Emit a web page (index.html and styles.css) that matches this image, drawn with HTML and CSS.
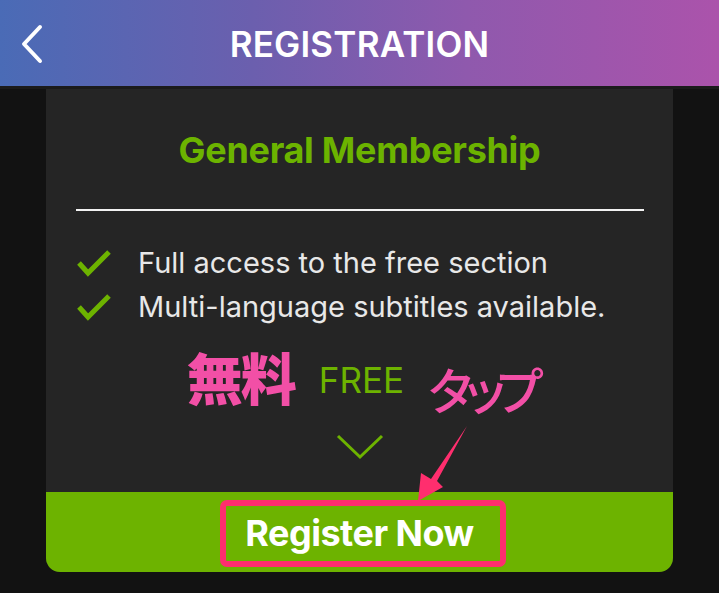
FILE: index.html
```html
<!DOCTYPE html>
<html lang="en">
<head>
    <meta charset="UTF-8">
    <meta name="viewport" content="width=device-width, initial-scale=1.0">
    <title>Registration</title>
    <link rel="stylesheet" href="styles.css">
</head>
<body>
    <header class="topbar">
        <button class="back" aria-label="Back">
            <svg width="24" height="40" viewBox="0 0 24 40">
                <path d="M20 3 L4 20 L20 37" fill="none" stroke="#fff" stroke-width="4" stroke-linecap="round" stroke-linejoin="round"/>
            </svg>
        </button>
        <h1 class="topbar-title">REGISTRATION</h1>
        <span></span>
    </header>
    <div class="topbar-edge"></div>

    <div class="card">
        <h2 class="plan-title">General Membership</h2>
        <hr class="divider">

        <ul class="features">
            <li>
                <svg class="check" width="36" height="28" viewBox="0 0 36 28">
                    <path d="M3 14 L12 24 L33 3" fill="none" stroke="#6db300" stroke-width="5"/>
                </svg>
                Full access to the free section
            </li>
            <li>
                <svg class="check" width="36" height="28" viewBox="0 0 36 28">
                    <path d="M3 14 L12 24 L33 3" fill="none" stroke="#6db300" stroke-width="5"/>
                </svg>
                Multi-language subtitles available.
            </li>
        </ul>

        <div class="price-row">
            <span class="note-free">無料</span>
            <span class="price">FREE</span>
            <span class="note-tap">タップ</span>
        </div>

        <svg class="chevron" width="48" height="26" viewBox="0 0 48 26">
            <path d="M2 2 L24 23 L46 2" fill="none" stroke="#6db300" stroke-width="3"/>
        </svg>

        <div class="card-footer">
            <button class="register">Register Now</button>
        </div>

        <!-- annotation arrow, drawn in page coordinates -->
        <svg class="tap-arrow" width="627" height="483" viewBox="46 89 627 483">
            <polygon points="467,426 437,481 443,487 418,501 421,473 431,479" fill="#ff2e6e"/>
        </svg>
    </div>
</body>
</html>
```

FILE: styles.css
```css
body {
    margin: 0;
    background-color: #121212;
    font-family: Inter, "Noto Sans", sans-serif;
    color: #e8e8e8;
}

.topbar {
    display: grid;
    grid-template-columns: 1fr auto 1fr;
    align-items: center;
    height: 86px;
    background: linear-gradient(90deg, #4a6bb6 0%, #6b5fae 35%, #8f59ad 65%, #ab53ab 100%);
}

.back {
    justify-self: start;
    margin-left: 20px;
    margin-top: 2px;
    padding: 0;
    background: none;
    border: none;
    display: flex;
}

.topbar-title {
    margin: 2px 0 0;
    color: #fff;
    font-size: 35px;
    font-weight: 600;
    letter-spacing: 0.2px;
}

.topbar-edge {
    height: 3px;
    background-color: #1b1b1b;
}

.card {
    position: relative;
    width: 627px;
    margin-left: 46px;
    background-color: #252525;
    border-radius: 0 0 14px 14px;
    overflow: hidden;
    display: flex;
    flex-direction: column;
    align-items: center;
}

.plan-title {
    margin: 39px 0 0;
    color: #6cb300;
    font-size: 36px;
    font-weight: 700;
    line-height: 44px;
    letter-spacing: -0.3px;
}

.divider {
    align-self: stretch;
    margin: 37px 29px 0 30px;
    border: none;
    height: 2px;
    background-color: #f2f2f2;
}

.features {
    align-self: stretch;
    list-style: none;
    margin: 30px 0 0;
    padding: 0 0 0 30px;
    font-size: 29px;
    line-height: 44px;
}

.features li {
    display: flex;
    align-items: center;
    gap: 26px;
}

.check {
    flex-shrink: 0;
}

.price-row {
    display: flex;
    align-items: flex-start;
    height: 70px;
    margin: 17px 0 0 -4px;
}

.note-free {
    font-family: "Noto Sans CJK JP", sans-serif;
    font-weight: 900;
    font-size: 56px;
    line-height: 60px;
    color: #f24fa6;
    letter-spacing: -2px;
}

.price {
    margin: 16px 0 0 24px;
    font-size: 35px;
    line-height: 36px;
    color: #6db300;
}

.note-tap {
    margin: 14px 0 0 22px;
    font-family: "Noto Sans CJK JP", sans-serif;
    font-weight: 500;
    font-size: 50px;
    line-height: 56px;
    color: #f24fa6;
    letter-spacing: -16px;
}

.chevron {
    margin-top: 18px;
}

.card-footer {
    align-self: stretch;
    margin-top: 32px;
    height: 80px;
    background-color: #6db300;
    display: flex;
    justify-content: center;
    padding-top: 8px;
    box-sizing: border-box;
}

.register {
    width: 286px;
    height: 67px;
    margin-left: 7px;
    background: none;
    border: 6px solid #ff2e6e;
    border-radius: 7px;
    color: #fff;
    font-family: Inter, "Noto Sans", sans-serif;
    font-size: 36px;
    font-weight: 700;
    letter-spacing: -0.5px;
    padding: 0 7px 2px 0;
}

.tap-arrow {
    position: absolute;
    left: 0;
    top: 0;
    pointer-events: none;
}
```
